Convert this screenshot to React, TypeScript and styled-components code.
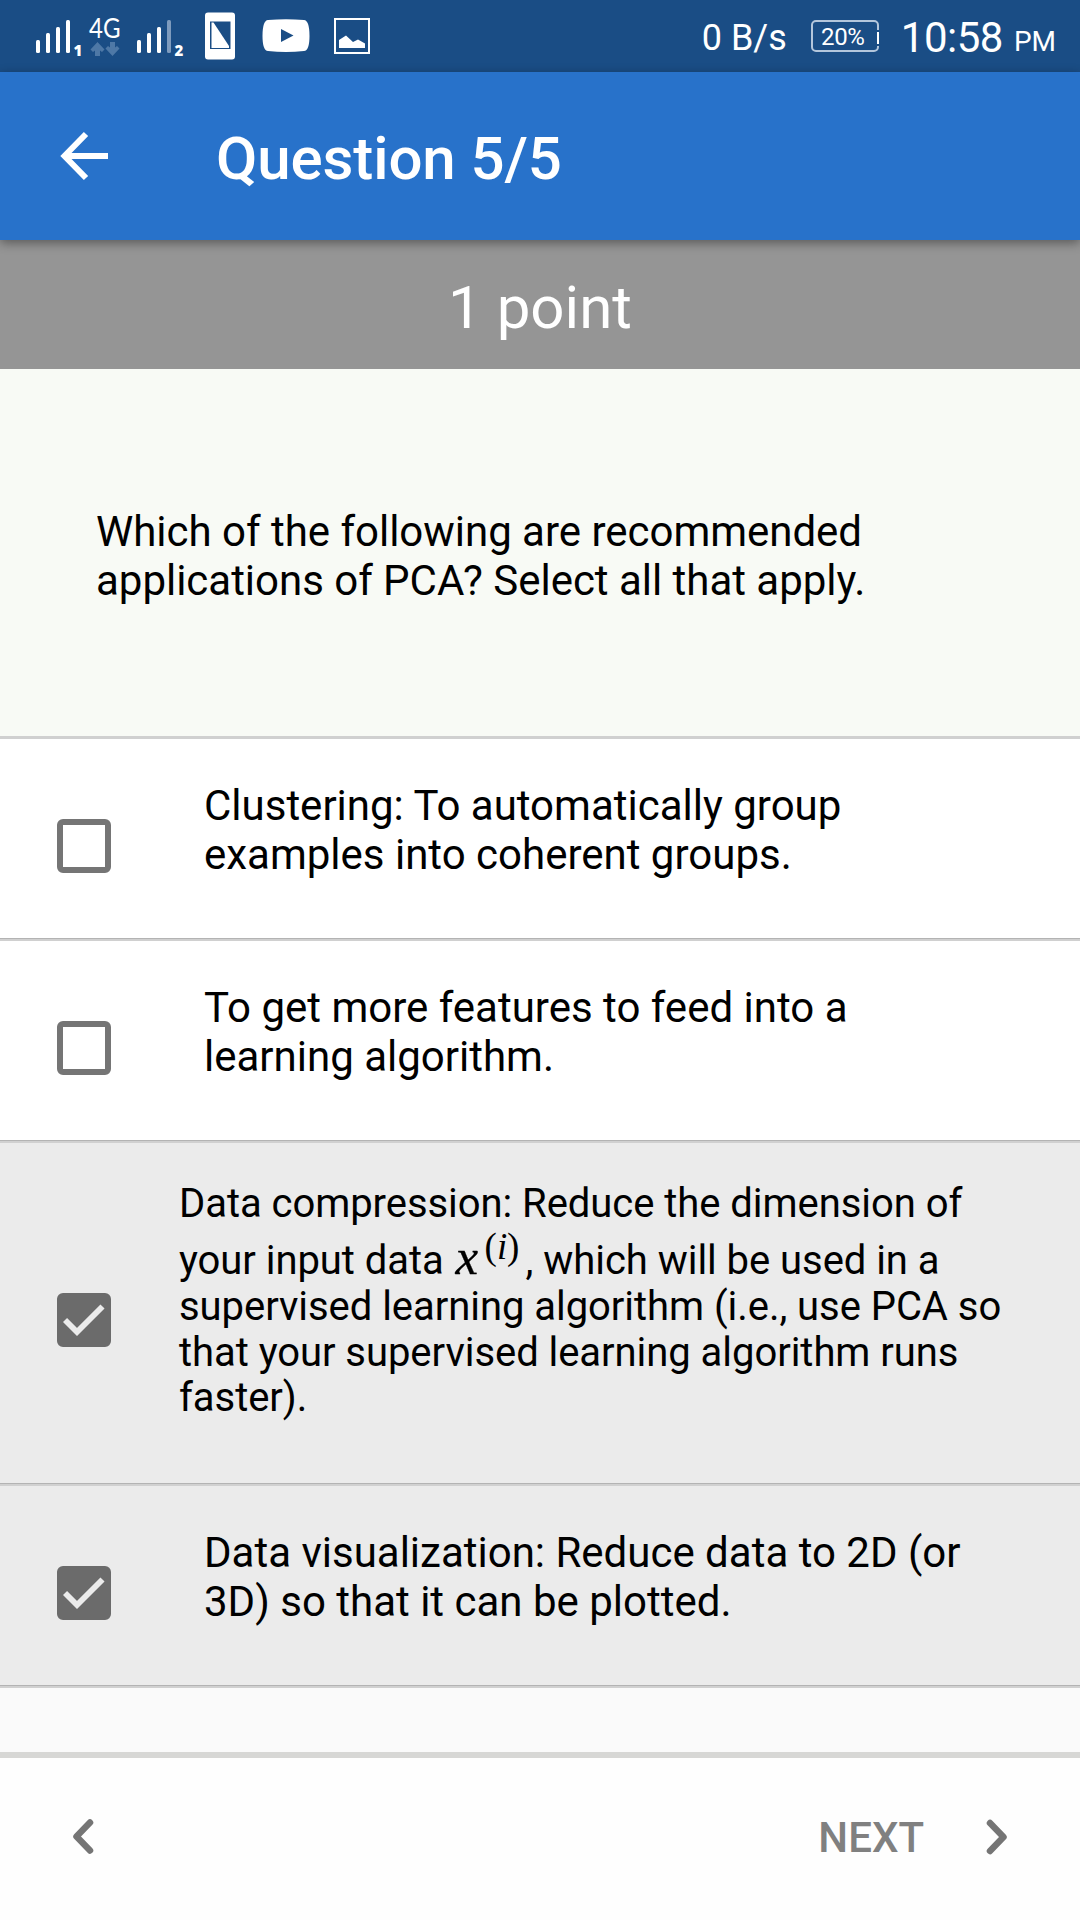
import React from "react";
import styled, { createGlobalStyle } from "styled-components";

const Global = createGlobalStyle`
  body { margin: 0; background: #fafafa; }
  * { box-sizing: border-box; }
`;

const Screen = styled.div`
  width: 1080px;
  height: 1920px;
  display: flex;
  flex-direction: column;
  overflow: hidden;
  background: #fafafa;
  color: #000;
  font-family: Roboto, sans-serif;
`;

const StatusBar = styled.div`
  flex: none;
  height: 72px;
  display: flex;
  justify-content: space-between;
  background: #1a4d85;
  color: #fff;
`;

const StatusIcons = styled.svg`
  display: block;
  width: 400px;
  height: 72px;
`;

const StatusInfo = styled.div`
  display: flex;
  align-items: flex-start;
  padding-right: 24px;
  white-space: nowrap;
`;

const Speed = styled.span`
  margin: 13px 24px 0 0;
  font-size: 36px;
  line-height: 50px;
`;

const Battery = styled.span`
  position: relative;
  width: 68px;
  height: 32px;
  margin: 20px 22px 0 0;
  padding-right: 4px;
  border: 2px solid #b3c6dc;
  border-radius: 5px;
  text-align: center;
  font-size: 24px;
  line-height: 30px;
  letter-spacing: -0.4px;

  &::after {
    content: "";
    position: absolute;
    right: -2px;
    top: 8px;
    width: 2px;
    height: 12px;
    background: #fff;
    border-top: 2px solid #1a4d85;
    border-bottom: 2px solid #1a4d85;
  }
`;

const Clock = styled.span`
  margin: 13px 11px 0 0;
  font-size: 42px;
  line-height: 50px;
  letter-spacing: -0.5px;
`;

const Meridiem = styled.span`
  margin-top: 17px;
  font-size: 28px;
  line-height: 50px;
`;

const AppBar = styled.header`
  flex: none;
  position: relative;
  height: 168px;
  display: flex;
  align-items: center;
  padding-left: 48px;
  background: #2872ca;
  color: #fff;
  box-shadow: 0 3px 10px rgba(0, 0, 0, 0.4);
`;

const BackIcon = styled.svg`
  width: 72px;
  height: 72px;
  margin-right: 96px;
`;

const Title = styled.h1`
  margin: 6px 0 0;
  font-size: 60px;
  font-weight: 500;
  line-height: 70px;
  letter-spacing: -0.1px;
`;

const Points = styled.div`
  flex: none;
  height: 129px;
  padding-top: 33px;
  background: #959595;
  color: #fff;
  text-align: center;
  font-size: 60px;
  line-height: 70px;
`;

const Question = styled.div`
  flex: none;
  height: 370px;
  padding: 138px 96px 0;
  border-bottom: 3px solid #d0d0d0;
  background: #f8faf5;
  font-size: 42px;
  line-height: 49px;
  letter-spacing: -0.02px;
  white-space: pre-line;
`;

const OptionRow = styled.div<{ $checked?: boolean; $tall?: boolean }>`
  flex: none;
  height: ${(p) => (p.$tall ? 343 : 202)}px;
  display: flex;
  align-items: center;
  padding-left: 57px;
  border-bottom: 2px solid #d0d0d0;
  background: ${(p) => (p.$checked ? "#ebebeb" : "#fff")};
  box-shadow: inset 0 -1px #b3b3b3;
`;

const Box = styled.span<{ $checked?: boolean; $raised?: boolean }>`
  flex: none;
  width: 54px;
  height: 54px;
  margin-top: ${(p) => (p.$raised ? 13 : 14)}px;
  border: 6px solid ${(p) => (p.$checked ? "#6b6b6b" : "#757575")};
  border-radius: 6px;
  background: ${(p) => (p.$checked ? "#6b6b6b" : "transparent")};

  svg {
    display: block;
    width: 42px;
    height: 42px;
  }
`;

const OptionText = styled.div`
  align-self: flex-start;
  margin-left: 93px;
  padding-top: 42px;
  font-size: 42px;
  line-height: 49px;
  white-space: pre-line;
`;

const RichText = styled.div`
  align-self: flex-start;
  margin-left: 68px;
  padding-top: 38px;
  font-size: 40px;
  letter-spacing: -0.05px;
  white-space: nowrap;
`;

const Line = styled.div<{ $height?: number }>`
  height: ${(p) => p.$height ?? 46}px;
  line-height: 46px;
  padding-top: ${(p) => Math.max(0, (p.$height ?? 46) - 46)}px;
`;

const MathVar = styled.i`
  display: inline-block;
  width: 31px;
  padding-left: 2px;
  font-family: "Liberation Serif", serif;
  font-size: 51px;
  line-height: 0;
  -webkit-text-stroke: 0.3px #000;
`;

const MathSup = styled.span`
  display: inline-block;
  width: 41px;
  font-family: "Liberation Serif", serif;
  font-size: 37px;
  line-height: 0;
  transform: translateY(-15px);
`;

const Footer = styled.footer`
  flex: none;
  height: 168px;
  margin-top: auto;
  display: flex;
  align-items: center;
  justify-content: space-between;
  padding: 0 57px 5px 57px;
  border-top: 6px solid #d7d7d5;
  background: #fefefe;
  color: #808080;
`;

const NextGroup = styled.div`
  display: flex;
  align-items: center;
  font-size: 42px;
  font-weight: 500;
  line-height: 50px;
`;

const NextLabel = styled.span`
  padding-top: 3px;
`;

const Chevron = styled.svg<{ $gap?: number }>`
  width: 54px;
  height: 54px;
  margin-left: ${(p) => p.$gap ?? 0}px;
  fill: none;
  stroke: #757575;
  stroke-width: 6.5;
  stroke-linecap: round;
  stroke-linejoin: round;
`;

function Check({ checked, raised }: { checked?: boolean; raised?: boolean }) {
  return (
    <Box $checked={checked} $raised={raised}>
      {checked && (
        <svg viewBox="0 0 42 42">
          <path d="M2 21 14 33 39.5 7.500" fill="none" stroke="#ebebeb" strokeWidth="5.8" />
        </svg>
      )}
    </Box>
  );
}

function Notifications() {
  return (
    <StatusIcons viewBox="0 0 400 72" fill="#fff">
      <rect x="36" y="40" width="4" height="13" rx="1.5" />
      <rect x="46" y="33" width="4" height="20" rx="1.5" />
      <rect x="56" y="27" width="4" height="26" rx="1.5" />
      <rect x="66" y="20" width="4" height="33" rx="1.5" />
      <text x="73.5" y="56" fontFamily="Open Sans, sans-serif" fontWeight="800" fontSize="15">1</text>
      <text x="89" y="37.5" fontFamily="Lato, sans-serif" fontWeight="400" fontSize="27" textLength="31.5" lengthAdjust="spacingAndGlyphs">4G</text>
      <g fill="#4e78a6">
        <path d="M97.5 42 104.500 49.5 102 52 100 50.500V56H95V50.500L93 52 90.500 49.500Z" />
        <path d="M112.500 56 119.500 48.500 117 46 115 47.500V42H110V47.500L108 46 105.500 48.500Z" />
      </g>
      <rect x="137" y="40" width="4" height="13" rx="1.5" />
      <rect x="147" y="33" width="4" height="20" rx="1.5" />
      <rect x="157" y="27" width="4" height="26" rx="1.5" />
      <rect x="167" y="20" width="4" height="33" rx="1.5" fill="#7e9bbd" />
      <text x="174.500" y="56" fontFamily="Open Sans, sans-serif" fontWeight="800" fontSize="15">2</text>
      <rect x="205" y="12.500" width="30" height="47" rx="3" />
      <path d="M210 21.500H230.500V49H210Z" fill="#1a4d85" />
      <path d="M211.500 22.500H213.500L229 46V48H211.500Z" />
      <path d="M268 20Q286 18.500 304 20Q309.500 20.500 309.500 36Q309.500 50.500 304 51Q286 53 268 51Q262.500 50.500 262.500 36Q262.500 20.500 268 20Z" />
      <path d="M281 29V42L293.500 35.500Z" fill="#1a4d85" />
      <path d="M335 19H369V53H335Z" fill="none" stroke="#fff" strokeWidth="2" />
      <path d="M339 48V40L346 35.500 353 42 358 39.500 365 43.500V48Z" />
    </StatusIcons>
  );
}

export default function App() {
  return (
    <Screen>
      <Global />
      <StatusBar>
        <Notifications />
        <StatusInfo>
          <Speed>0 B/s</Speed>
          <Battery>20%</Battery>
          <Clock>10:58</Clock>
          <Meridiem>PM</Meridiem>
        </StatusInfo>
      </StatusBar>
      <AppBar>
        <BackIcon viewBox="0 0 72 72" fill="none" stroke="#fff" strokeWidth="6">
          <path d="M38 14 16.500 36 38 58M16 36H60" />
        </BackIcon>
        <Title>Question 5/5</Title>
      </AppBar>
      <Points>1 point</Points>
      <Question>{"Which of the following are recommended\napplications of PCA? Select all that apply."}</Question>
      <OptionRow>
        <Check />
        <OptionText>{"Clustering: To automatically group\nexamples into coherent groups."}</OptionText>
      </OptionRow>
      <OptionRow>
        <Check />
        <OptionText>{"To get more features to feed into a\nlearning algorithm."}</OptionText>
      </OptionRow>
      <OptionRow $checked $tall>
        <Check checked raised />
        <RichText>
          <Line>Data compression: Reduce the dimension of</Line>
          <Line $height={57}>
            your input data <MathVar>x</MathVar><MathSup>(<i>i</i>)</MathSup>, which will be used in a
          </Line>
          <Line>supervised learning algorithm (i.e., use PCA so</Line>
          <Line $height={45}>that your supervised learning algorithm runs</Line>
          <Line>faster).</Line>
        </RichText>
      </OptionRow>
      <OptionRow $checked>
        <Check checked />
        <OptionText>{"Data visualization: Reduce data to 2D (or\n3D) so that it can be plotted."}</OptionText>
      </OptionRow>
      <Footer>
        <Chevron viewBox="0 0 54 54"><path d="M33 12.500 19.500 26.500 33 40.500" /></Chevron>
        <NextGroup>
          <NextLabel>NEXT</NextLabel>
          <Chevron $gap={45} viewBox="0 0 54 54"><path d="M21 13 34.500 27 21 41" /></Chevron>
        </NextGroup>
      </Footer>
    </Screen>
  );
}
